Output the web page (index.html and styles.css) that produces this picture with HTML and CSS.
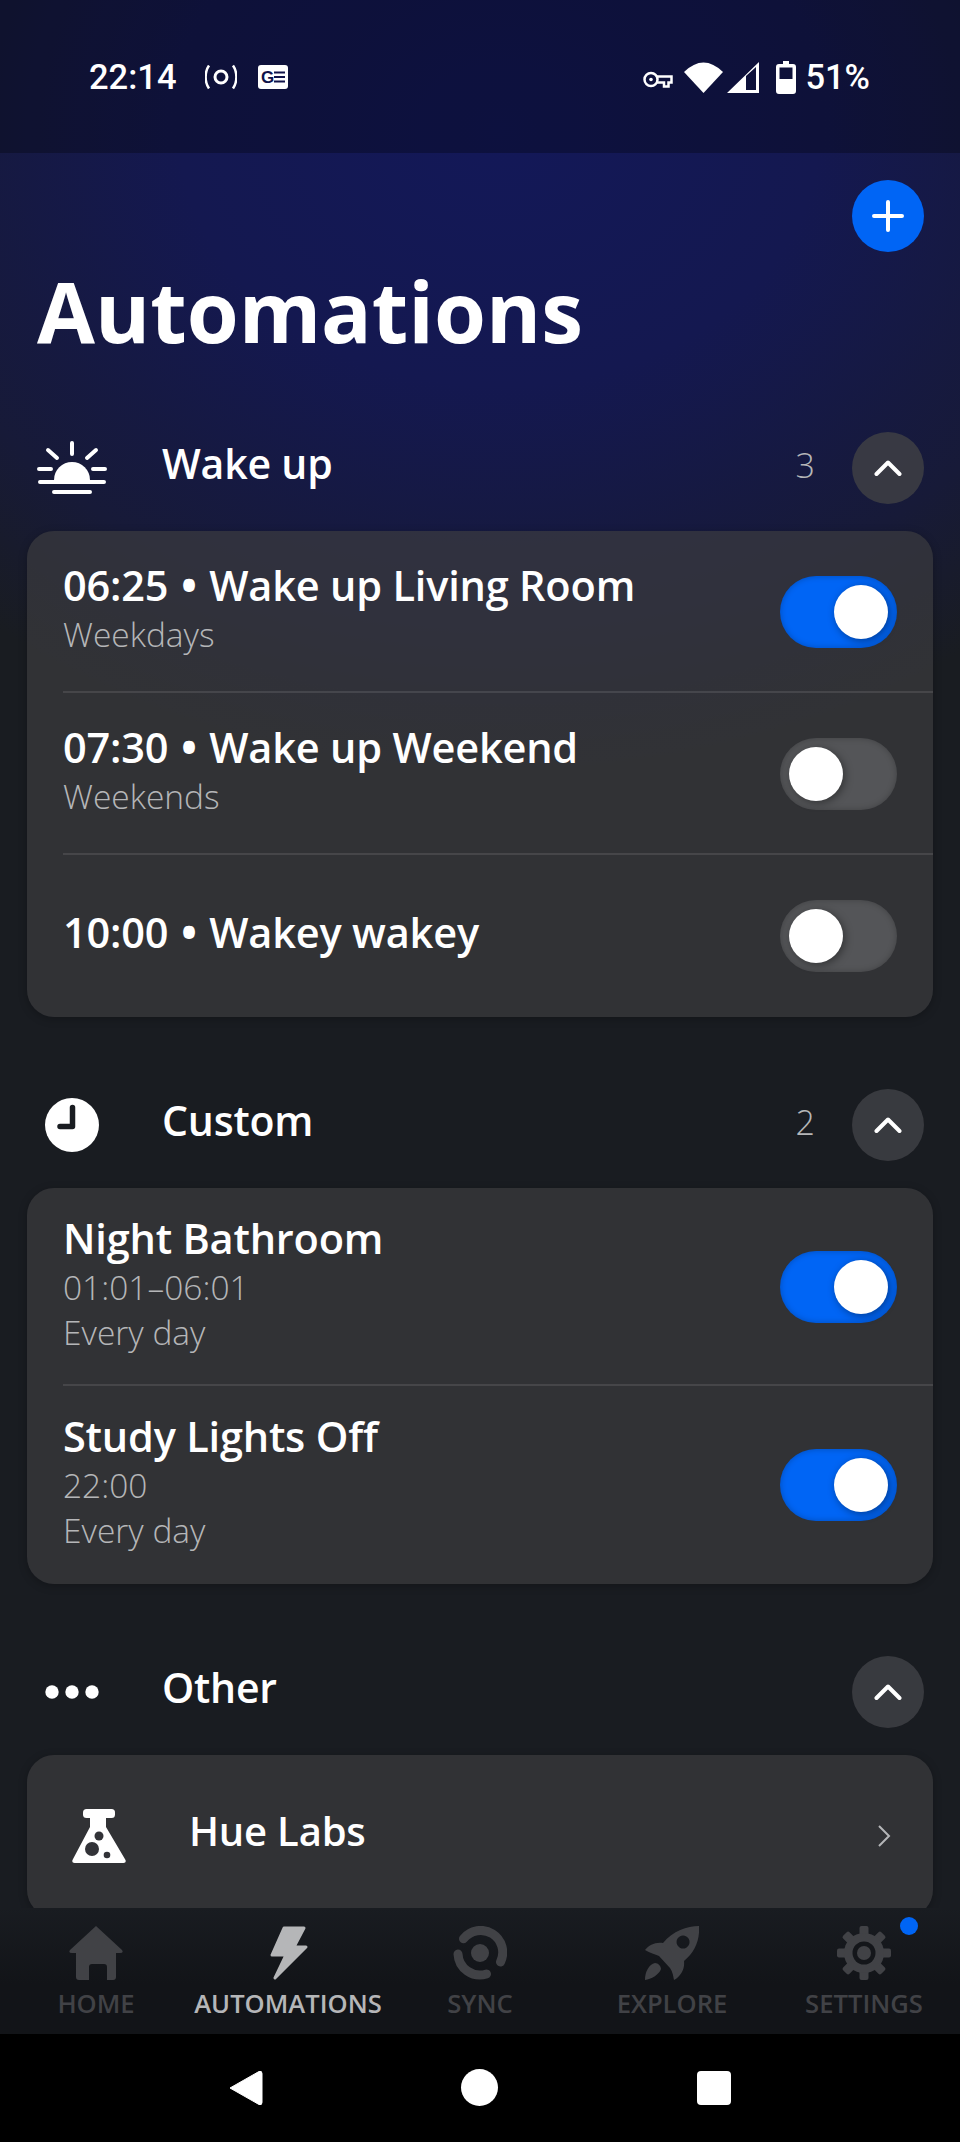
FILE: index.html
```html
<!DOCTYPE html>
<html lang="en">
<head>
  <meta charset="UTF-8" />
  <meta name="viewport" content="width=device-width, initial-scale=1.0"/>
  <title>Automations</title>
  <link rel="stylesheet" href="styles.css">
</head>
<body>
<div class="page">
  <div class="status-bar">
    <div class="status-left">
      <span class="clock">22:14</span>
      <svg class="ic-radio" viewBox="0 0 32 26"><circle cx="16" cy="13" r="6" fill="none" stroke="#fff" stroke-width="3"/><path d="M4 1.500C-.5 8-.5 18 4 24.500M28 1.500c4.500 6.500 4.500 16.500 0 23" fill="none" stroke="#fff" stroke-width="2.500"/></svg>
      <svg class="ic-news" viewBox="0 0 30 24"><rect width="30" height="24" rx="3" fill="#fff"/><text x="3" y="18" class="news-g">G</text><path d="M16 7.500h11M16 12h11M16 16.500h11" stroke="#10134a" stroke-width="2.200"/></svg>
    </div>
    <div class="status-right">
      <svg class="ic-key" viewBox="0 0 30 17"><circle cx="8" cy="8.500" r="6.500" fill="none" stroke="#fff" stroke-width="2.500"/><circle cx="8" cy="8.500" r="1.800" fill="#fff"/><path d="M14 5.500h14.500v6h-3v4h-4.500v-4h-7" fill="none" stroke="#fff" stroke-width="2.500"/></svg>
      <svg class="ic-wifi" viewBox="0 0 39 31"><path d="M0 10Q19.500-9 39 10L19.500 31Z" fill="#fff"/></svg>
      <svg class="ic-signal" viewBox="0 0 32 31"><path fill-rule="evenodd" d="M0 31L32 0V31ZM19 14V28H29V5Z" fill="#fff"/></svg>
      <svg class="ic-battery" viewBox="0 0 20 33"><path fill-rule="evenodd" d="M7 0h6v3h4q3 0 3 3v24q0 3-3 3H3q-3 0-3-3V6q0-3 3-3h4ZM3.500 6.500V18h13V6.500Z" fill="#fff"/></svg>
      <span class="percent">51%</span>
    </div>
  </div>

  <main class="content">
    <div class="toolbar">
      <button class="add-btn">
        <svg viewBox="0 0 32 32"><path d="M16 2v28M2 16h28" stroke="#fff" stroke-width="4" stroke-linecap="round"/></svg>
      </button>
    </div>
    <h1>Automations</h1>

    <section class="group">
      <div class="group-head">
        <div class="group-icon">
          <svg class="ic-sun" viewBox="0 0 70 56"><path d="M17 40a18 18 0 0 1 36 0Z" fill="#fff"/><path d="M3 42h64M17 52h36M35 3v11M11 10l9 8M59 10l-9 8M2 29h12M56 29h12" stroke="#fff" stroke-width="4" stroke-linecap="round"/></svg>
        </div>
        <h2>Wake up</h2>
        <span class="count">3</span>
        <button class="collapse"><svg viewBox="0 0 28 18"><path d="M2.500 15L14 3.500 25.500 15" fill="none" stroke="#fff" stroke-width="4" stroke-linecap="round" stroke-linejoin="round"/></svg></button>
      </div>
      <div class="card">
        <div class="row row-2">
          <div class="row-text">
            <div class="row-title">06:25 <span class="dot">•</span> Wake up Living Room</div>
            <div class="row-sub">Weekdays</div>
          </div>
          <div class="toggle on"><span class="knob"></span></div>
        </div>
        <div class="row row-2">
          <div class="row-text">
            <div class="row-title">07:30 <span class="dot">•</span> Wake up Weekend</div>
            <div class="row-sub">Weekends</div>
          </div>
          <div class="toggle"><span class="knob"></span></div>
        </div>
        <div class="row row-2">
          <div class="row-text">
            <div class="row-title">10:00 <span class="dot">•</span> Wakey wakey</div>
          </div>
          <div class="toggle"><span class="knob"></span></div>
        </div>
      </div>
    </section>

    <section class="group">
      <div class="group-head">
        <div class="group-icon">
          <svg class="ic-clock" viewBox="0 0 54 54"><circle cx="27" cy="27" r="27" fill="#fff"/><path d="M27.500 9.500V28.500H15" fill="none" stroke="#191c21" stroke-width="5.500" stroke-linecap="round" stroke-linejoin="round"/></svg>
        </div>
        <h2>Custom</h2>
        <span class="count">2</span>
        <button class="collapse"><svg viewBox="0 0 28 18"><path d="M2.500 15L14 3.500 25.500 15" fill="none" stroke="#fff" stroke-width="4" stroke-linecap="round" stroke-linejoin="round"/></svg></button>
      </div>
      <div class="card">
        <div class="row row-3">
          <div class="row-text">
            <div class="row-title">Night Bathroom</div>
            <div class="row-sub">01:01–06:01</div>
            <div class="row-sub">Every day</div>
          </div>
          <div class="toggle on"><span class="knob"></span></div>
        </div>
        <div class="row row-3">
          <div class="row-text">
            <div class="row-title">Study Lights Off</div>
            <div class="row-sub">22:00</div>
            <div class="row-sub">Every day</div>
          </div>
          <div class="toggle on"><span class="knob"></span></div>
        </div>
      </div>
    </section>

    <section class="group">
      <div class="group-head">
        <div class="group-icon">
          <svg class="ic-dots" viewBox="0 0 54 14"><circle cx="7" cy="7" r="6.700" fill="#fff"/><circle cx="27" cy="7" r="6.700" fill="#fff"/><circle cx="47" cy="7" r="6.700" fill="#fff"/></svg>
        </div>
        <h2>Other</h2>
        <button class="collapse"><svg viewBox="0 0 28 18"><path d="M2.500 15L14 3.500 25.500 15" fill="none" stroke="#fff" stroke-width="4" stroke-linecap="round" stroke-linejoin="round"/></svg></button>
      </div>
      <div class="card">
        <div class="row row-2 link-row">
          <svg class="ic-flask" viewBox="0 0 54 54"><rect x="11" y="0" width="32" height="9" rx="3.500" fill="#fff"/><path d="M18 8h16v10l19.500 33q1 3-2 3H2.500q-3 0-2-3L18 18Z" fill="#fff"/><circle cx="27" cy="27" r="4.500" fill="#323338"/><circle cx="20" cy="40" r="7" fill="#323338"/><circle cx="35" cy="46" r="3.300" fill="#323338"/></svg>
          <div class="row-title link-title">Hue Labs</div>
          <svg class="ic-chevron" viewBox="0 0 14 24"><path d="M2 2l10 10L2 22" fill="none" stroke="#b5b6b8" stroke-width="2"/></svg>
        </div>
      </div>
    </section>
  </main>

  <nav class="tabs">
    <div class="tab">
      <svg class="tab-icon" viewBox="0 0 54 54"><path fill-rule="evenodd" d="M27 0L53 24q2 3-2 3H47V51q0 3-3 3H38V41q0-3-3-3H23q-3 0-3 3V54H10q-3 0-3-3V27H3q-4 0-2-3Z"/></svg>
      <span>HOME</span>
    </div>
    <div class="tab active">
      <svg class="tab-icon" viewBox="0 0 54 54"><path d="M23 2H43L33 21H45L14 52 25 29H11Z" stroke-width="3" stroke-linejoin="round"/></svg>
      <span>AUTOMATIONS</span>
    </div>
    <div class="tab">
      <svg class="tab-icon" viewBox="0 0 54 54"><circle cx="27" cy="27" r="9"/><path class="arc" d="M10.500 12.700A22 22 0 0 1 47.500 36M5 28A22 22 0 0 0 33.500 48"/></svg>
      <span>SYNC</span>
    </div>
    <div class="tab">
      <svg class="tab-icon" viewBox="0 0 54 54"><path fill-rule="evenodd" d="M54 0C55 14 50 26 39 35C40 43 36 50 29 54C28 48 27 45 25 42L14 30C10 28 5 27 0 24C4 19 10 16 18 17C28 5 42 0 54 0ZM38 9.500a6.500 6.500 0 1 0 .1 0ZM0 54C0 46 4 38 10 37C13 37 16 40 16 43C14 49 6 53 0 54Z"/></svg>
      <span>EXPLORE</span>
    </div>
    <div class="tab">
      <div class="badge"></div>
      <svg class="tab-icon" viewBox="0 0 54 54">
        <g class="teeth"><rect x="22.500" y="0" width="9" height="54" rx="2"/><rect x="22.500" y="0" width="9" height="54" rx="2" transform="rotate(45 27 27)"/><rect x="22.500" y="0" width="9" height="54" rx="2" transform="rotate(90 27 27)"/><rect x="22.500" y="0" width="9" height="54" rx="2" transform="rotate(135 27 27)"/></g>
        <circle cx="27" cy="27" r="20"/><circle class="gear-hole" cx="27" cy="27" r="11.500"/><circle cx="27" cy="27" r="7"/>
      </svg>
      <span>SETTINGS</span>
    </div>
  </nav>

  <div class="sys-nav">
    <svg class="sys-back" viewBox="0 0 35 38"><path d="M2 19L31 2.500Q34 1.500 34 4.500V33.500Q34 36.500 31 35.500Z" fill="#fff" stroke="#fff" stroke-linejoin="round"/></svg>
    <span class="sys-home"></span>
    <span class="sys-recent"></span>
  </div>
</div>
</body>
</html>
```

FILE: styles.css
```css
* {
  box-sizing: border-box;
}

body {
  margin: 0;
  background: #000;
  font-family: "Open Sans", "Noto Sans", sans-serif;
  color: #fff;
}

button {
  border: none;
  padding: 0;
  cursor: pointer;
}

.page {
  width: 960px;
  height: 2142px;
  display: flex;
  flex-direction: column;
  overflow: hidden;
  background: radial-gradient(ellipse 800px 640px at 52% 130px, #131858 0%, #141850 40%, #171a38 78%, #191c21 100%), #191c21;
  background-color: #191c21;
}

/* status bar */
.status-bar {
  height: 153px;
  flex: none;
  display: flex;
  justify-content: space-between;
  align-items: flex-start;
  padding: 59px 90px 0 89px;
  background: rgba(0, 0, 0, 0.28);
}

.status-left,
.status-right {
  display: flex;
  align-items: center;
}

.clock,
.percent {
  font-family: Roboto, sans-serif;
  font-weight: 500;
  font-size: 34.5px;
  line-height: 36px;
}

.ic-radio {
  width: 32px;
  height: 26px;
  margin-left: 28px;
}

.ic-news {
  width: 30px;
  height: 24px;
  margin-left: 21px;
}

.news-g {
  font-family: "Liberation Sans", sans-serif;
  font-weight: 700;
  font-size: 17px;
  fill: #10134a;
}

.ic-key {
  width: 30px;
  height: 17px;
  margin-top: 4px;
}

.ic-wifi {
  width: 39px;
  height: 31px;
  margin-left: 11px;
}

.ic-signal {
  width: 32px;
  height: 31px;
  margin-left: 4px;
}

.ic-battery {
  width: 20px;
  height: 33px;
  margin-left: 17px;
}

.percent {
  margin-left: 9px;
}

/* main area */
.content {
  flex: 1;
  min-height: 0;
  overflow: hidden;
}

.toolbar {
  display: flex;
  justify-content: flex-end;
  padding: 27px 36px 0;
}

.add-btn {
  width: 72px;
  height: 72px;
  border-radius: 50%;
  background: #0065f5;
  display: flex;
  align-items: center;
  justify-content: center;
}

.add-btn svg {
  width: 32px;
  height: 32px;
}

h1 {
  margin: 0 0 0 37px;
  height: 180px;
  font-size: 84px;
  font-weight: 700;
  line-height: 118px;
}

.group {
  margin: 0 27px 72px;
}

.group-head {
  height: 72px;
  margin-bottom: 27px;
  padding: 0 9px;
  display: flex;
  align-items: center;
}

.group-icon {
  width: 72px;
  margin-right: 54px;
  display: flex;
  justify-content: center;
  align-items: center;
}

.ic-sun {
  width: 70px;
  height: 56px;
}

.ic-clock {
  width: 54px;
  height: 54px;
}

.ic-dots {
  width: 54px;
  height: 14px;
}

h2 {
  margin: 0 auto 0 0;
  font-size: 41px;
  font-weight: 600;
  letter-spacing: -0.2px;
  line-height: 56px;
  position: relative;
  top: -5px;
}

.count {
  font-size: 34px;
  font-weight: 300;
  color: #b5b6b8;
  margin-right: 37px;
  position: relative;
  top: -3px;
}

.collapse {
  width: 72px;
  height: 72px;
  border-radius: 50%;
  background: rgba(62, 63, 68, 0.85);
  display: flex;
  align-items: center;
  justify-content: center;
}

.collapse svg {
  width: 28px;
  height: 18px;
}

/* cards and rows */
.card {
  border-radius: 27px;
  background: rgba(60, 61, 64, 0.68);
  box-shadow: 0 2px 8px rgba(0, 0, 0, 0.25);
}

.row {
  display: flex;
  align-items: center;
  justify-content: space-between;
  padding: 0 36px;
  position: relative;
}

.row + .row::before {
  content: "";
  position: absolute;
  top: -2px;
  left: 36px;
  right: 0;
  height: 2px;
  background: rgba(255, 255, 255, 0.1);
}

.row-2 {
  height: 162px;
}

.row-3 {
  height: 198px;
}

.row-text {
  padding-bottom: 9px;
}

.row-title {
  font-size: 41.5px;
  font-weight: 600;
  letter-spacing: -0.2px;
  line-height: 54px;
}

.dot {
  font-size: 48px;
  line-height: 0;
  margin: 0 1px;
  vertical-align: -2px;
}

.row-sub {
  font-size: 33.5px;
  font-weight: 300;
  line-height: 45px;
  color: #b5b6b8;
}

.toggle {
  width: 117px;
  height: 72px;
  flex: none;
  border-radius: 36px;
  background: #545558;
  padding: 9px;
  box-shadow: inset 0 0 6px rgba(0, 0, 0, 0.25);
  display: flex;
}

.toggle.on {
  background: #0065f5;
  justify-content: flex-end;
}

.knob {
  width: 54px;
  height: 54px;
  border-radius: 50%;
  background: #fff;
  box-shadow: 2px 2px 8px rgba(0, 0, 0, 0.4);
}

.link-row {
  justify-content: flex-start;
  padding-left: 45px;
}

.ic-flask {
  width: 54px;
  height: 54px;
  flex: none;
}

.link-title {
  margin-left: 63px;
  flex: 1;
  font-size: 40px;
  position: relative;
  top: -5px;
}

.ic-chevron {
  width: 14px;
  height: 24px;
  margin-right: 6px;
}

/* bottom tabs */
.tabs {
  height: 126px;
  flex: none;
  display: grid;
  grid-template-columns: repeat(5, 192px);
  padding-top: 18px;
  background: linear-gradient(to bottom, #191c21, #121418 60%);
}

.tab {
  display: flex;
  flex-direction: column;
  align-items: center;
  position: relative;
  color: #414246;
  fill: #414246;
  font-size: 25.6px;
  font-weight: 600;
  line-height: 36px;
}

.tab.active {
  color: #b5b6b8;
  fill: #b5b6b8;
  stroke: #b5b6b8;
}

.tab-icon {
  width: 54px;
  height: 54px;
  margin-bottom: 6px;
}

.arc {
  fill: none;
  stroke: #414246;
  stroke-width: 9;
  stroke-linecap: round;
}

.gear-hole {
  fill: #14161a;
}

.badge {
  position: absolute;
  left: 132px;
  top: -9px;
  width: 18px;
  height: 18px;
  border-radius: 50%;
  background: #0065f5;
}

/* android nav */
.sys-nav {
  height: 108px;
  flex: none;
  background: #000;
  display: flex;
  align-items: center;
  padding: 0 0 1px 228px;
}

.sys-back {
  width: 35px;
  height: 38px;
}

.sys-home {
  width: 37px;
  height: 37px;
  margin-left: 198px;
  border-radius: 50%;
  background: #fff;
}

.sys-recent {
  width: 34px;
  height: 34px;
  margin-left: 199px;
  border-radius: 4px;
  background: #fff;
}
```
